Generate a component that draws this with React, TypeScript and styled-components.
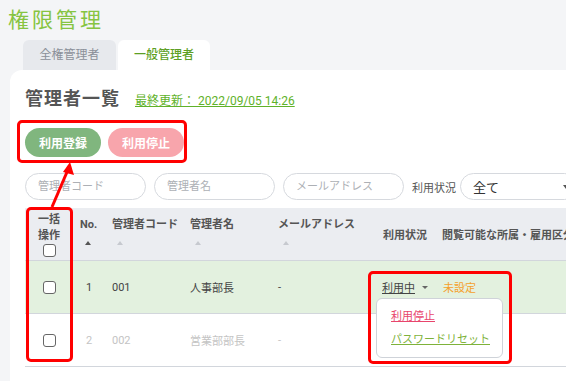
import React from "react";
import styled, { createGlobalStyle } from "styled-components";

const GlobalStyle = createGlobalStyle`
  html, body {
    margin: 0;
    padding: 0;
    background: #f4f5f7;
    overflow: hidden;
    font-family: Roboto, "Noto Sans CJK JP", sans-serif;
  }
`;

type Row = {
  no: number;
  code: string;
  name: string;
  mail: string;
  active: boolean;
};

const rows: Row[] = [
  { no: 1, code: "001", name: "人事部長", mail: "-", active: true },
  { no: 2, code: "002", name: "営業部部長", mail: "-", active: false },
];

const App = () => {
  return (
    <Page>
      <GlobalStyle />

      {/* ページタイトル */}
      <Title>権限管理</Title>

      {/* タブ */}
      <Tabs>
        <Tab>全権管理者</Tab>
        <Tab $active>一般管理者</Tab>
      </Tabs>

      <Card>
        {/* 見出し */}
        <HeadingRow>
          <Heading>管理者一覧</Heading>
          <Updated>最終更新： 2022/09/05 14:26</Updated>
        </HeadingRow>

        {/* 操作ボタン */}
        <ButtonRow>
          <PillButton $color="#80b67e">利用登録</PillButton>
          <PillButton $color="#f8a5ac">利用停止</PillButton>
        </ButtonRow>

        {/* 検索条件 */}
        <FilterRow>
          <SearchInput placeholder="管理者コード" />
          <SearchInput placeholder="管理者名" />
          <SearchInput placeholder="メールアドレス" />
          <FilterLabel>利用状況</FilterLabel>
          <Select>
            <span>全て</span>
            <SelectCaret />
          </Select>
        </FilterRow>

        {/* 一覧テーブル */}
        <Table>
          <HeadRow>
            <BulkHead>
              <span>一括</span>
              <span>操作</span>
              <Check />
            </BulkHead>
            <SortHead>
              No.
              <Caret $on />
            </SortHead>
            <SortHead>
              管理者コード
              <Caret />
            </SortHead>
            <SortHead>
              管理者名
              <Caret />
            </SortHead>
            <SortHead>
              メールアドレス
              <Caret />
            </SortHead>
            <PlainHead>利用状況</PlainHead>
            <PlainHead>閲覧可能な所属・雇用区分</PlainHead>
          </HeadRow>

          {rows.map((r) => (
            <BodyRow key={r.no} $active={r.active}>
              <CheckCell>
                <Check />
              </CheckCell>
              <NoCell>{r.no}</NoCell>
              <Cell>{r.code}</Cell>
              <Cell>{r.name}</Cell>
              <Cell>{r.mail}</Cell>
              {r.active ? (
                <StatusCell>
                  <StatusLink>利用中</StatusLink>
                  <SmallCaret />
                  <Menu>
                    <MenuItem $color="#e8456c">利用停止</MenuItem>
                    <MenuItem $color="#7eb23a">パスワードリセット</MenuItem>
                  </Menu>
                </StatusCell>
              ) : (
                <Cell />
              )}
              {r.active ? <Unset>未設定</Unset> : <Cell />}
            </BodyRow>
          ))}
        </Table>
      </Card>

      {/* 注釈 */}
      <Highlight style={{ left: 17, top: 120, width: 170, height: 43 }} />
      <Highlight style={{ left: 26, top: 207, width: 47, height: 155 }} />
      <Highlight style={{ left: 368, top: 271, width: 144, height: 93 }} />
      <Arrow width="90" height="60" viewBox="0 0 90 60">
        <line x1="52" y1="47" x2="67" y2="12" stroke="#ff0000" strokeWidth="3" />
        <polygon points="70,2 74,15 63,12" fill="#ff0000" />
      </Arrow>
    </Page>
  );
};

// common
const Page = styled.div`
  position: relative;
  width: 566px;
  height: 381px;
  overflow: hidden;
`;

const Title = styled.h1`
  margin: 0;
  padding: 8px 0 8px 8px;
  height: 24px;
  line-height: 24px;
  font-size: 21px;
  font-weight: 400;
  letter-spacing: 3px;
  color: #86c441;
`;

// タブ
const Tabs = styled.div`
  display: flex;
  gap: 2px;
  padding-left: 23px;
  height: 30px;
`;

const Tab = styled.div<{ $active?: boolean }>`
  width: ${(p) => (p.$active ? 92 : 93)}px;
  height: 30px;
  line-height: 30px;
  text-align: center;
  font-size: 12px;
  font-weight: ${(p) => (p.$active ? 500 : 400)};
  color: ${(p) => (p.$active ? "#5d9f24" : "#8b9099")};
  background: ${(p) => (p.$active ? "#ffffff" : "#e7e9ed")};
  border-radius: 6px 6px 0 0;
`;

// カード
const Card = styled.div`
  margin-left: 10px;
  background: #fff;
  border-top-left-radius: 12px;
  padding: 14px 0 20px 15px;
  height: 300px;
  overflow: hidden;
`;

const HeadingRow = styled.div`
  display: flex;
  align-items: center;
  height: 26px;
  gap: 15px;
`;

const Heading = styled.h2`
  margin: 0;
  font-size: 18px;
  font-weight: 700;
  letter-spacing: 1px;
  color: #555;
`;

const Updated = styled.a`
  font-size: 12px;
  color: #5fb22a;
  text-decoration: underline;
  margin-top: 4px;
`;

const ButtonRow = styled.div`
  display: flex;
  gap: 7px;
  margin-top: 18px;
`;

const PillButton = styled.button<{ $color: string }>`
  height: 29px;
  padding: 0 14px;
  border: none;
  border-radius: 15px;
  background: ${(p) => p.$color};
  color: #fff;
  font-family: inherit;
  font-size: 12px;
  font-weight: 700;
`;

// 検索条件
const FilterRow = styled.div`
  display: flex;
  align-items: center;
  margin-top: 16px;
  height: 27px;
  white-space: nowrap;
`;

const SearchInput = styled.input`
  box-sizing: border-box;
  width: 121px;
  height: 27px;
  margin-right: 8px;
  padding: 0 12px;
  border: 1px solid #d6d9de;
  border-radius: 14px;
  font-family: inherit;
  font-size: 11px;
  &::placeholder {
    color: #adb0b5;
  }
`;

const FilterLabel = styled.span`
  font-size: 11px;
  color: #555;
  margin-right: 4px;
`;

const Select = styled.div`
  box-sizing: border-box;
  display: flex;
  align-items: center;
  justify-content: space-between;
  flex-shrink: 0;
  width: 118px;
  height: 27px;
  padding: 0 8px 0 12px;
  border: 1px solid #d6d9de;
  border-radius: 14px;
  font-size: 13px;
  color: #333;
`;

const SelectCaret = styled.span`
  width: 0;
  height: 0;
  border-left: 3px solid transparent;
  border-right: 3px solid transparent;
  border-top: 4px solid #555;
`;

// テーブル
const Table = styled.div`
  margin-top: 8px;
  width: 620px;
`;

const cols = "48px 32px 78px 88px 105px 59px 1fr";

const HeadRow = styled.div`
  display: grid;
  grid-template-columns: ${cols};
  height: 52px;
  background: #ebedf1;
  border-bottom: 1px solid #d2d6dc;
  font-size: 11px;
  font-weight: 700;
  color: #555;
  white-space: nowrap;
`;

const BulkHead = styled.div`
  display: flex;
  flex-direction: column;
  align-items: center;
  justify-content: center;
  line-height: 16px;
`;

const SortHead = styled.div`
  display: flex;
  flex-direction: column;
  align-items: flex-start;
  padding: 9px 0 0 7px;
  line-height: 16px;
`;

const PlainHead = styled.div`
  display: flex;
  align-items: center;
  padding-left: 7px;
`;

const Caret = styled.span<{ $on?: boolean }>`
  margin: 8px 0 0 5px;
  width: 0;
  height: 0;
  border-left: 3.5px solid transparent;
  border-right: 3.5px solid transparent;
  border-bottom: 4px solid ${(p) => (p.$on ? "#555" : "#c6c9cf")};
`;

const Check = styled.span`
  box-sizing: border-box;
  display: block;
  width: 13px;
  height: 13px;
  border: 1.5px solid #666;
  border-radius: 3px;
  background: #fff;
`;

const BodyRow = styled.div<{ $active: boolean }>`
  display: grid;
  grid-template-columns: ${cols};
  align-items: center;
  height: 52px;
  background: ${(p) => (p.$active ? "#e3f1df" : "#fff")};
  border-bottom: 1px solid #d2d6dc;
  font-size: 11px;
  color: ${(p) => (p.$active ? "#444" : "#c4c4c4")};
  white-space: nowrap;
`;

const Cell = styled.div`
  padding-left: 7px;
`;

const CheckCell = styled.div`
  display: flex;
  justify-content: center;
`;

const NoCell = styled.div`
  text-align: center;
`;

const StatusCell = styled.div`
  position: relative;
  display: flex;
  align-items: center;
  padding-left: 6px;
`;

const StatusLink = styled.a`
  color: #444;
  text-decoration: underline;
`;

const SmallCaret = styled.span`
  margin-left: 7px;
  width: 0;
  height: 0;
  border-left: 3px solid transparent;
  border-right: 3px solid transparent;
  border-top: 3.5px solid #666;
`;

const Unset = styled.div`
  padding-left: 8px;
  color: #f5a02c;
`;

// ドロップダウン
const Menu = styled.div`
  position: absolute;
  left: 0;
  top: 19px;
  z-index: 2;
  box-sizing: border-box;
  width: 127px;
  padding: 6px 14px;
  background: #fff;
  border: 1px solid #cfd3d9;
  border-radius: 6px;
  display: flex;
  flex-direction: column;
  align-items: flex-start;
`;

const MenuItem = styled.a<{ $color: string }>`
  line-height: 23px;
  font-size: 11px;
  color: ${(p) => p.$color};
  text-decoration: underline;
`;

// 注釈
const Highlight = styled.div`
  position: absolute;
  box-sizing: border-box;
  border: 3px solid #ff0000;
  border-radius: 5px;
  z-index: 5;
`;

const Arrow = styled.svg`
  position: absolute;
  left: 0;
  top: 160px;
  z-index: 5;
`;

export default App;
